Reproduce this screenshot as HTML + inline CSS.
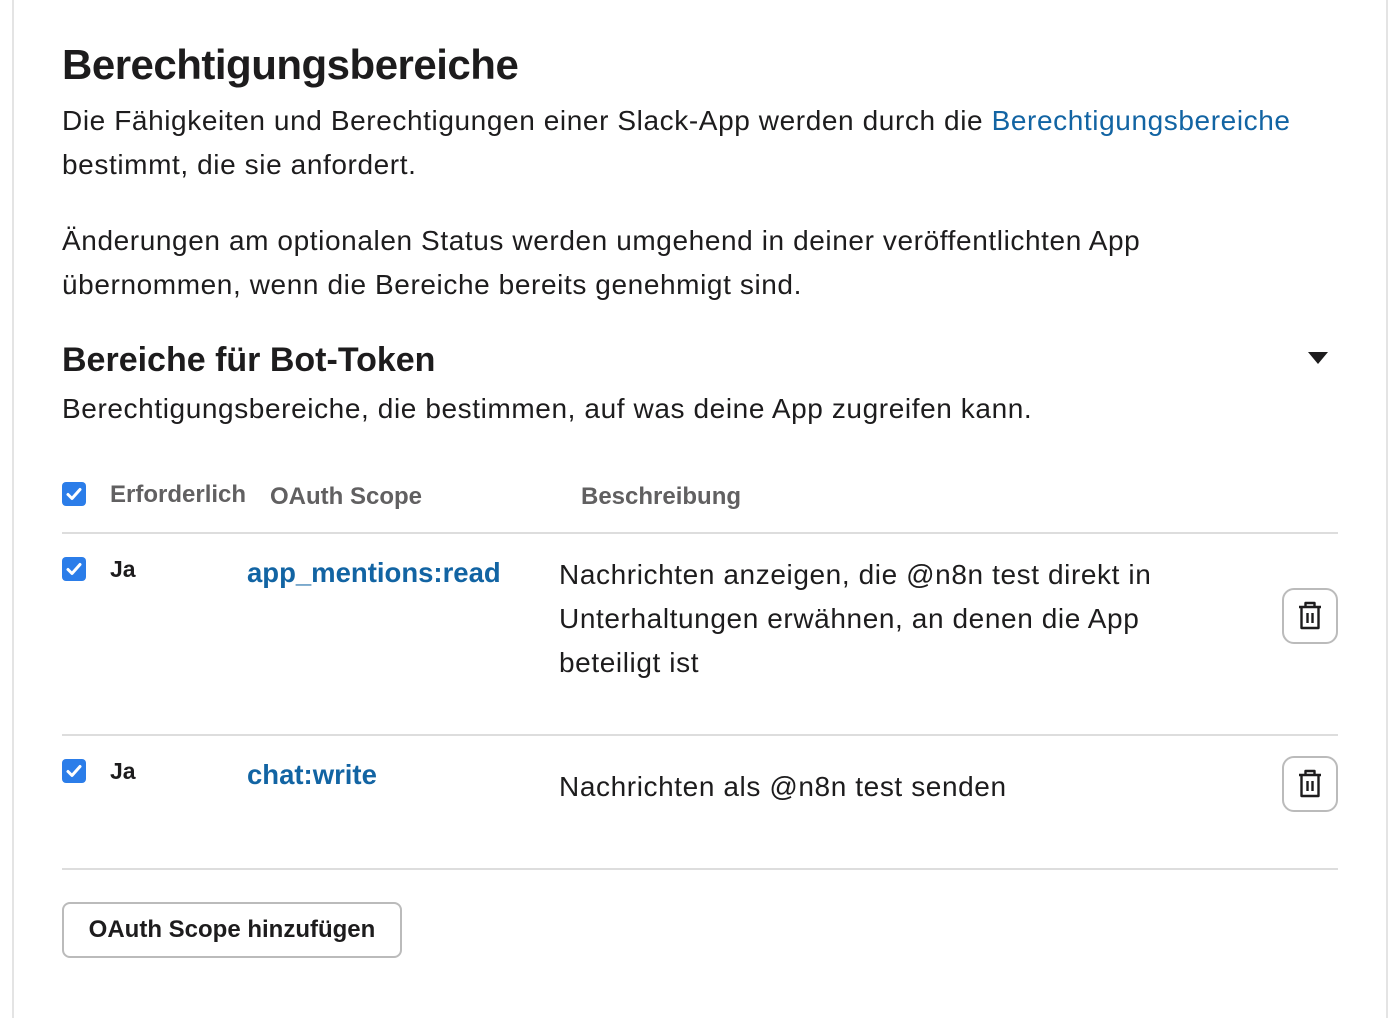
<!DOCTYPE html>
<html><head><meta charset="utf-8"><style>
body{margin:0;width:1394px;height:1008px;background:#fff;position:relative;overflow:hidden;font-family:"Liberation Sans",sans-serif;color:#1d1c1d}
.frame{position:absolute;left:12px;top:-2px;width:1372px;height:1020px;border-left:2px solid #e4e4e4;border-right:2px solid #e4e4e4}
.a{position:absolute;white-space:nowrap}
h1{position:absolute;left:62px;top:41px;margin:0;font-size:42px;font-weight:bold;letter-spacing:-0.5px}
.p{font-size:28px;line-height:44px;letter-spacing:0.6px}
.link{color:#1264a3}
.hr{position:absolute;left:62px;width:1276px;height:2px;background:#dddddd}
.cb{position:absolute;width:24px;height:24px;border-radius:4px;background:#2b7de9}
.cb svg{display:block}
.th{font-size:24px;color:#616061;font-weight:bold}
.scope{font-size:27.5px;color:#1264a3;font-weight:bold}
.trash{position:absolute;left:1282px;width:56px;height:56px;border:2px solid #bbb;border-radius:12px;box-sizing:border-box;display:flex;align-items:center;justify-content:center}
.btn{position:absolute;left:62px;top:902px;width:340px;height:56px;border:2px solid #bbb;border-radius:8px;box-sizing:border-box;font-size:24px;font-weight:bold;display:flex;align-items:center;justify-content:center}
</style></head><body>
<div class="frame"></div>
<h1>Berechtigungsbereiche</h1>
<div class="a p" style="left:62px;top:99px">Die Fähigkeiten und Berechtigungen einer Slack-App werden durch die <span class="link">Berechtigungsbereiche</span></div>
<div class="a p" style="left:62px;top:143px">bestimmt, die sie anfordert.</div>
<div class="a p" style="left:62px;top:219px">Änderungen am optionalen Status werden umgehend in deiner veröffentlichten App</div>
<div class="a p" style="left:62px;top:263px">übernommen, wenn die Bereiche bereits genehmigt sind.</div>
<div class="a" style="left:62px;top:341px;font-size:34px;font-weight:bold">Bereiche für Bot-Token</div>
<svg class="a" style="left:1308px;top:352px" width="20" height="12"><path d="M0 0H20L10 12Z" fill="#1d1c1d"/></svg>
<div class="a p" style="left:62px;top:387px">Berechtigungsbereiche, die bestimmen, auf was deine App zugreifen kann.</div>

<div class="cb" style="left:62px;top:482px"><svg width="24" height="24"><path d="M6 12.5l4 4 8-9" stroke="#fff" stroke-width="3" fill="none" stroke-linecap="round" stroke-linejoin="round"/></svg></div>
<div class="a th" style="left:110px;top:481px">Erforderlich</div>
<div class="a th" style="left:270px;top:483px">OAuth Scope</div>
<div class="a th" style="left:581px;top:483px">Beschreibung</div>
<div class="hr" style="top:532px"></div>

<div class="cb" style="left:62px;top:557px"><svg width="24" height="24"><path d="M6 12.5l4 4 8-9" stroke="#fff" stroke-width="3" fill="none" stroke-linecap="round" stroke-linejoin="round"/></svg></div>
<div class="a" style="left:110px;top:556px;font-size:23px;font-weight:bold">Ja</div>
<div class="a scope" style="left:247px;top:557px">app_mentions:read</div>
<div class="a p" style="left:559px;top:553px">Nachrichten anzeigen, die @n8n test direkt in</div>
<div class="a p" style="left:559px;top:597px">Unterhaltungen erwähnen, an denen die App</div>
<div class="a p" style="left:559px;top:641px">beteiligt ist</div>
<div class="trash" style="top:588px"><svg width="26" height="30" viewBox="0 0 26 30"><path d="M8.5 5V2h9v3M2 6h22M4.5 6.5v20.5h17V6.5M10.5 12v10M15.5 12v10" stroke="#1d1c1d" stroke-width="2.4" fill="none" stroke-linejoin="round"/></svg></div>
<div class="hr" style="top:734px"></div>

<div class="cb" style="left:62px;top:759px"><svg width="24" height="24"><path d="M6 12.5l4 4 8-9" stroke="#fff" stroke-width="3" fill="none" stroke-linecap="round" stroke-linejoin="round"/></svg></div>
<div class="a" style="left:110px;top:758px;font-size:23px;font-weight:bold">Ja</div>
<div class="a scope" style="left:247px;top:759px">chat:write</div>
<div class="a p" style="left:559px;top:765px">Nachrichten als @n8n test senden</div>
<div class="trash" style="top:756px"><svg width="26" height="30" viewBox="0 0 26 30"><path d="M8.5 5V2h9v3M2 6h22M4.5 6.5v20.5h17V6.5M10.5 12v10M15.5 12v10" stroke="#1d1c1d" stroke-width="2.4" fill="none" stroke-linejoin="round"/></svg></div>
<div class="hr" style="top:868px"></div>

<div class="btn">OAuth Scope hinzufügen</div>
</body></html>
